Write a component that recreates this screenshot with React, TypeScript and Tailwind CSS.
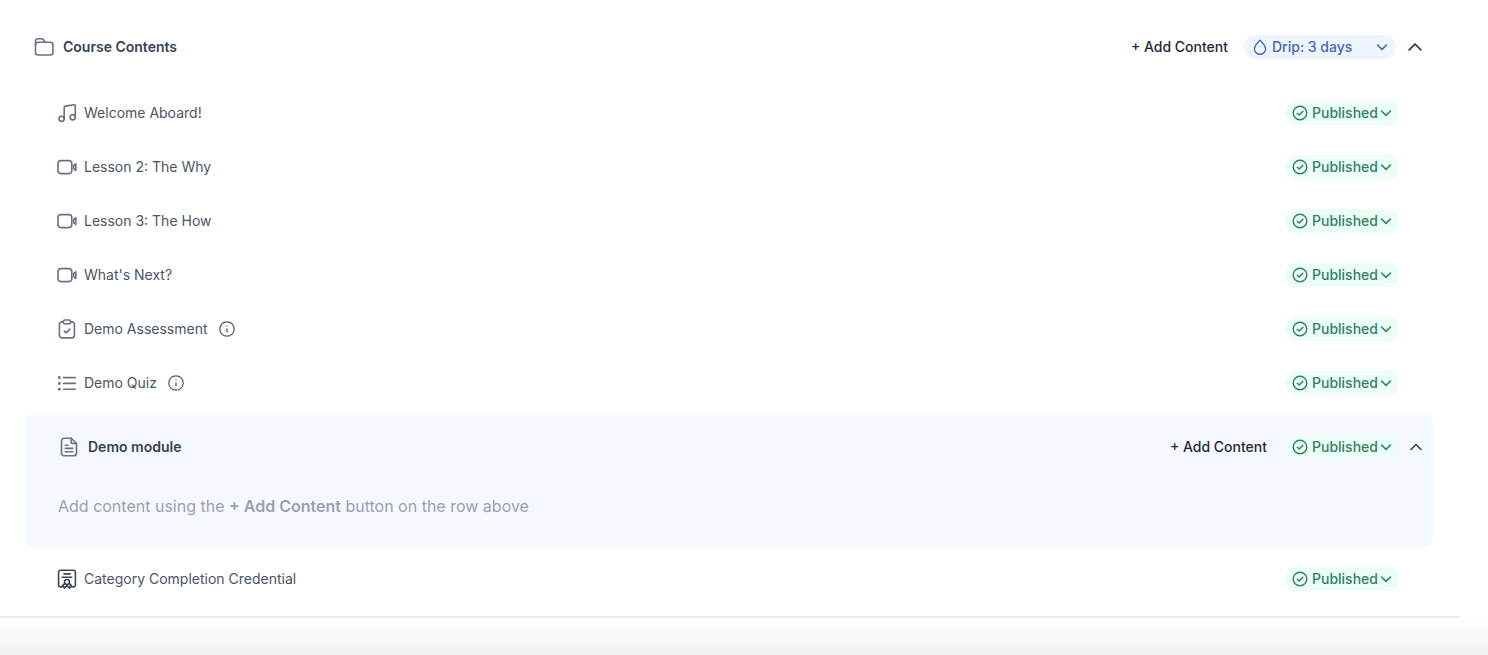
import type { ReactNode } from 'react';

type IconName = 'music' | 'video' | 'assessment' | 'quiz' | 'credential' | 'folder' | 'document';

interface ContentItem {
  id: string;
  title: string;
  icon: IconName;
  hasInfo?: boolean;
}

const lessons: ContentItem[] = [
  { id: 'welcome', title: 'Welcome Aboard!', icon: 'music' },
  { id: 'lesson-2', title: 'Lesson 2: The Why', icon: 'video' },
  { id: 'lesson-3', title: 'Lesson 3: The How', icon: 'video' },
  { id: 'next', title: "What's Next?", icon: 'video' },
  { id: 'assessment', title: 'Demo Assessment', icon: 'assessment', hasInfo: true },
  { id: 'quiz', title: 'Demo Quiz', icon: 'quiz', hasInfo: true },
];

const credential: ContentItem = {
  id: 'credential',
  title: 'Category Completion Credential',
  icon: 'credential',
};

const iconShapes: Record<IconName, ReactNode> = {
  folder: (
    <>
      <path d="M1.5 8V4a2.2 2.2 0 0 1 2.2-2.2h4.1a2 2 0 0 1 1.7.9l1 1.6c.3.5.5.9 1 .9" />
      <rect x="1.5" y="5.2" width="17.4" height="12.8" rx="2.4" />
    </>
  ),
  music: (
    <>
      <path d="M7.2 15.8V4.6c0-.8.5-1.3 1.3-1.5l8.4-1.4c.8-.1 1.4.4 1.4 1.2v11.2" />
      <circle cx="4.6" cy="15.8" r="2.6" />
      <circle cx="15.7" cy="14.3" r="2.6" />
    </>
  ),
  video: (
    <>
      <rect x="1" y="3.6" width="13.8" height="13" rx="3" />
      <path d="M16.6 8.6l2.2-1.8v6.6l-2.2-1.8z" />
    </>
  ),
  assessment: (
    <>
      <path d="M6.4 2.9H5a2.6 2.6 0 0 0-2.6 2.6v10.8A2.6 2.6 0 0 0 5 18.9h9.8a2.6 2.6 0 0 0 2.6-2.6V5.5a2.6 2.6 0 0 0-2.6-2.6h-1.2" />
      <rect x="6.4" y="1" width="7.2" height="3.8" rx="1.4" />
      <path d="M7.2 12l2 1.9 3.6-3.8" />
    </>
  ),
  quiz: (
    <>
      <path d="M6.6 4.6h11.8M6.6 10.4h11.8M6.6 16.2h11.8" />
      <path d="M2.3 4.5v.2M2.3 10.3v.2M2.3 16.1v.2" strokeWidth="2.8" />
    </>
  ),
  document: (
    <>
      <path d="M12.2 1.2H5.4a2.9 2.9 0 0 0-2.9 2.9v11.8a2.9 2.9 0 0 0 2.9 2.9h9.2a2.9 2.9 0 0 0 2.9-2.9V6.5z" />
      <path d="M12.2 1.2v3.5c0 1.1.7 1.8 1.8 1.8h3.5" />
      <path d="M6.3 8.2h2.6M6.3 11.4h7.4M6.3 14.7h7.4" />
    </>
  ),
  credential: (
    <>
      <path d="M4 17.9h-.6a1.8 1.8 0 0 1-1.8-1.8V3a1.8 1.8 0 0 1 1.8-1.8h13.2A1.8 1.8 0 0 1 18.4 3v13.1a1.8 1.8 0 0 1-1.8 1.8H16" />
      <path d="M7 4.9h6.2M5.2 8.2h9.6" />
      <circle cx="10" cy="13" r="2.5" />
      <path d="M7.8 14.4l-3 3.2 2-.1.6 1.7 2.6-2.8 2.6 2.8.6-1.7 2 .1-3-3.2" />
    </>
  ),
};

function Icon({ name }: { name: IconName }) {
  const color = name === 'credential' ? 'text-[#3f4757]' : 'text-gray-500';
  return (
    <svg
      viewBox="0 0 20 20"
      className={`size-5 shrink-0 ${color}`}
      fill="none"
      stroke="currentColor"
      strokeWidth="1.6"
      strokeLinecap="round"
      strokeLinejoin="round"
      aria-hidden="true"
    >
      {iconShapes[name]}
    </svg>
  );
}

function Chevron({ up = false, className = '' }: { up?: boolean; className?: string }) {
  return (
    <svg
      viewBox="0 0 12 12"
      className={`shrink-0 ${className}`}
      fill="none"
      stroke="currentColor"
      strokeWidth="1.6"
      strokeLinecap="round"
      strokeLinejoin="round"
      aria-hidden="true"
    >
      <path d={up ? 'M1 8.5l5-5 5 5' : 'M1.5 4l4.5 4.3L10.5 4'} />
    </svg>
  );
}

function StatusSelect({ label }: { label: string }) {
  return (
    <label className="flex h-6 items-center rounded-full bg-[#ecfdf5] px-[7px] text-[#2f8265]">
      <svg
        viewBox="0 0 16 16"
        className="mr-1 size-4 shrink-0"
        fill="none"
        stroke="currentColor"
        strokeWidth="1.4"
        strokeLinecap="round"
        strokeLinejoin="round"
        aria-hidden="true"
      >
        <circle cx="8" cy="8" r="6.8" />
        <path d="M5.2 8.2l2 1.9 3.7-3.8" />
      </svg>
      <select
        aria-label={`Status of ${label}`}
        className="cursor-pointer appearance-none bg-transparent pr-3 text-sm font-medium outline-none"
      >
        <option>Published</option>
        <option>Draft</option>
      </select>
      <Chevron className="pointer-events-none -ml-2.5 size-3" />
    </label>
  );
}

function DripSelect() {
  return (
    <label className="flex h-6 w-38 items-center rounded-full bg-[#eff5ff] px-2 text-[#4267bd]">
      <svg
        viewBox="0 0 16 16"
        className="mr-1 size-4 shrink-0"
        fill="none"
        stroke="currentColor"
        strokeWidth="1.4"
        strokeLinejoin="round"
        aria-hidden="true"
      >
        <path d="M8 1.2C6.1 3.4 2.4 6.6 2.4 9.7a5.6 5.6 0 0 0 11.2 0C13.6 6.6 9.9 3.4 8 1.2z" />
      </svg>
      <select
        aria-label="Drip schedule"
        className="min-w-0 flex-1 cursor-pointer appearance-none bg-transparent text-sm font-medium outline-none"
      >
        <option>Drip: 3 days</option>
        <option>Drip: 7 days</option>
      </select>
      <Chevron className="pointer-events-none size-3" />
    </label>
  );
}

function AddContentButton() {
  return (
    <button type="button" className="cursor-pointer text-sm font-medium text-gray-800">
      + Add Content
    </button>
  );
}

function InfoButton({ label }: { label: string }) {
  return (
    <button type="button" aria-label={`About ${label}`} className="ml-1 cursor-pointer text-gray-600">
      <svg viewBox="0 0 16 16" className="size-4" fill="none" stroke="currentColor" aria-hidden="true">
        <circle cx="8" cy="8" r="7.2" strokeWidth="1.2" />
        <path d="M8 7.4v3.8M8 4.6v1" strokeWidth="1.3" />
      </svg>
    </button>
  );
}

function ContentRow({ item }: { item: ContentItem }) {
  return (
    <li className="flex h-[54px] items-center justify-between pr-[34px] pl-8">
      <div className="flex items-center gap-[7px]">
        <Icon name={item.icon} />
        <span className="text-sm text-gray-600">{item.title}</span>
        {item.hasInfo && <InfoButton label={item.title} />}
      </div>
      <StatusSelect label={item.title} />
    </li>
  );
}

export default function App() {
  return (
    <div className="flex min-h-screen flex-col bg-white font-['Inter',sans-serif]">
      <main className="mr-7 border-b-2 border-[#ededee] pt-5 pr-[27px] pb-2.5 pl-[25px]">
        {/* Section header */}
        <header className="mb-3 flex h-[54px] items-center justify-between pr-[11px] pl-[9px]">
          <div className="flex items-center gap-[9px]">
            <Icon name="folder" />
            <h1 className="text-sm font-semibold text-gray-700">Course Contents</h1>
          </div>
          <div className="flex items-center">
            <AddContentButton />
            <div className="mr-3 ml-4">
              <DripSelect />
            </div>
            <button type="button" aria-label="Collapse course contents" className="cursor-pointer text-gray-700">
              <Chevron up className="size-3.5" />
            </button>
          </div>
        </header>

        <ul>
          {lessons.map((item) => (
            <ContentRow key={item.id} item={item} />
          ))}
        </ul>

        {/* Expanded module */}
        <section className="my-[5px] rounded-md bg-[#f5f8ff] pb-7">
          <div className="flex h-16 items-center justify-between pr-[11px] pl-[34px]">
            <div className="flex items-center gap-[9px]">
              <Icon name="document" />
              <h2 className="text-sm font-semibold text-gray-700">Demo module</h2>
            </div>
            <div className="flex items-center">
              <AddContentButton />
              <div className="mr-[11px] ml-[18px]">
                <StatusSelect label="Demo module" />
              </div>
              <button type="button" aria-label="Collapse demo module" className="cursor-pointer text-gray-700">
                <Chevron up className="size-3" />
              </button>
            </div>
          </div>
          <p className="pt-[15px] pb-px pl-[33px] text-base text-gray-400">
            Add content using the <strong className="font-semibold">+ Add Content</strong> button on the row above
          </p>
        </section>

        <ul>
          <ContentRow item={credential} />
        </ul>
      </main>
      <div className="flex-1 bg-linear-to-b from-white to-[#f1f1f1]" />
    </div>
  );
}
